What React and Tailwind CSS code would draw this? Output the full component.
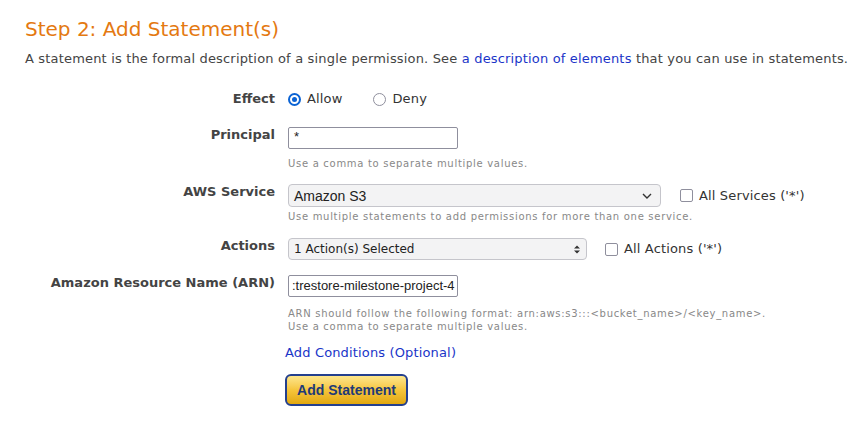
import React from 'react'

const verdana = { fontFamily: '"DejaVu Sans", Verdana, sans-serif' }

const Row = ({ label, children, className = '' }) => (
  <div className={`flex ${className}`}>
    <div className="w-[275px] shrink-0 text-right font-bold text-[13px] text-[#444]">{label}</div>
    <div className="ml-[13px] flex-1">{children}</div>
  </div>
)

const Help = ({ children }) => (
  <div className="text-[10px] leading-[13px] text-[#888] tracking-[0.7px]">{children}</div>
)

const Checkbox = ({ label }) => (
  <div className="flex items-center gap-[6px] text-[13px] text-[#333] tracking-[0.15px]">
    <div className="w-[13px] h-[13px] rounded-[2px] border border-[#8f8f9d] bg-white" />
    <span>{label}</span>
  </div>
)

export default function App() {
  return (
    <div className="bg-white w-[862px] h-[439px] pl-[25px] pt-[15px] text-[#333]" style={verdana}>
      <h2 className="text-[20px] leading-[28px] text-[#e47911]">Step 2: Add Statement(s)</h2>
      <p className="mt-[3px] text-[13px] leading-[26px] text-[#444] tracking-[0.17px]">
        A statement is the formal description of a single permission. See{' '}
        <a className="text-[#1a35c8]">a description of elements</a> that you can use in statements.
      </p>

      <div className="-ml-[25px] mt-[19px]">
        <Row label="Effect" className="leading-[16px]">
          <div className="flex items-center text-[13px] text-[#333] tracking-[0.15px]">
            <div className="flex items-center gap-[6px]">
              <div className="w-[13px] h-[13px] rounded-full border-2 border-[#0b63d4] flex items-center justify-center">
                <div className="w-[5px] h-[5px] rounded-full bg-[#0b63d4]" />
              </div>
              <span>Allow</span>
            </div>
            <div className="flex items-center gap-[6px] ml-[31px]">
              <div className="w-[13px] h-[13px] rounded-full border border-[#8f8f9d]" />
              <span>Deny</span>
            </div>
          </div>
        </Row>

        <Row label="Principal" className="mt-[20px] leading-[16px]">
          <div className="w-[170px] h-[22px] border border-[#8f8f9d] rounded-[2px] px-[5px] text-[13px] leading-[18px] text-[#222]" style={{ fontFamily: '"Liberation Sans", Arial, sans-serif' }}>*</div>
          <div className="mt-[8px]"><Help>Use a comma to separate multiple values.</Help></div>
        </Row>

        <Row label="AWS Service" className="mt-[14px] leading-[16px]">
          <div className="flex items-center">
            <div className="w-[373px] h-[23px] border border-[#c5c5cb] rounded-[4px] bg-[#f3f3f4] flex items-center justify-between px-[5px] text-[14px] text-[#222]" style={{ fontFamily: '"Liberation Sans", Arial, sans-serif' }}>
              <span>Amazon S3</span>
              <svg width="10" height="6" viewBox="0 0 10 6" className="mr-[3px]"><path d="M1 1l4 4 4-4" fill="none" stroke="#333" strokeWidth="1.4" /></svg>
            </div>
            <div className="ml-[19px]"><Checkbox label="All Services ('*')" /></div>
          </div>
          <div className="mt-[3px]"><Help>Use multiple statements to add permissions for more than one service.</Help></div>
        </Row>

        <Row label="Actions" className="mt-[15px] leading-[16px]">
          <div className="flex items-center">
            <div className="w-[299px] h-[22px] border border-[#c5c5cb] rounded-[4px] bg-[#f3f3f4] flex items-center justify-between px-[5px] text-[12px] text-[#222]">
              <span>1 Action(s) Selected</span>
              <svg width="6" height="9" viewBox="0 0 6 9" className="mr-[1px]"><path d="M0 3.5L3 0.5 6 3.5z M0 5.5L3 8.5 6 5.5z" fill="#333" /></svg>
            </div>
            <div className="ml-[18px]"><Checkbox label="All Actions ('*')" /></div>
          </div>
        </Row>

        <Row label="Amazon Resource Name (ARN)" className="mt-[15px] leading-[16px]">
          <div className="w-[170px] h-[22px] border border-[#8f8f9d] rounded-[2px] px-[3px] text-[13px] leading-[20px] text-[#222] overflow-hidden whitespace-nowrap" style={{ fontFamily: '"Liberation Sans", Arial, sans-serif' }}>:trestore-milestone-project-4</div>
          <div className="mt-[10px]">
            <Help>ARN should follow the following format: arn:aws:s3:::&lt;bucket_name&gt;/&lt;key_name&gt;.</Help>
            <Help>Use a comma to separate multiple values.</Help>
          </div>
          <a className="block -ml-[3px] mt-[10px] text-[13px] leading-[20px] text-[#1a35c8] tracking-[0.15px]">Add Conditions (Optional)</a>
          <button className="-ml-[3px] mt-[11px] w-[123px] h-[32px] rounded-[6px] border-2 border-[#24408e] bg-gradient-to-b from-[#fde68a] via-[#f6c53a] to-[#e2a80c] text-[14px] font-bold text-[#1e3a78]" style={{ fontFamily: '"Liberation Sans", Arial, sans-serif' }}>Add Statement</button>
        </Row>
      </div>
    </div>
  )
}
